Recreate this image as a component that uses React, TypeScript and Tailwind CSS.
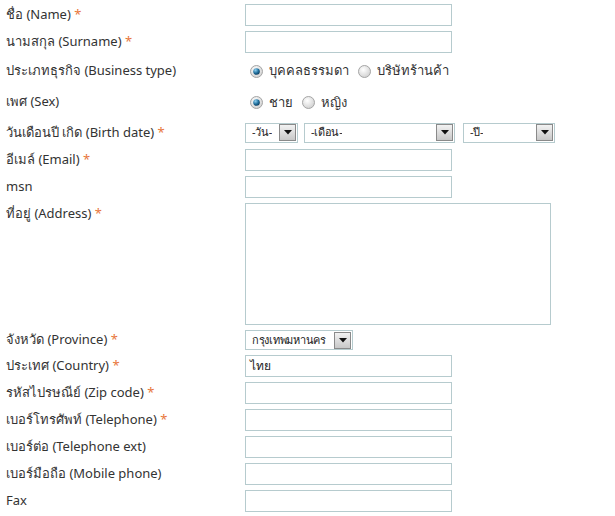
import React from 'react';

const FONT = { fontFamily: '"Noto Sans", Tahoma, "DejaVu Sans", sans-serif' };

function Star() {
  return <span className="text-[#e8763c]"> *</span>;
}

function Label({ th, en, req }: { th: string; en: string; req?: boolean }) {
  return (
    <span className="text-[13px] leading-[18px] text-[#333]">
      {th}
      {en ? ` (${en})` : ''}
      {req && <Star />}
    </span>
  );
}

function Radio({ on }: { on?: boolean }) {
  return (
    <svg width="13" height="13" viewBox="0 0 13 13" className="shrink-0">
      <defs>
        <radialGradient id="rg-off" cx="40%" cy="35%" r="70%">
          <stop offset="0%" stopColor="#ffffff" />
          <stop offset="100%" stopColor="#cfcfcf" />
        </radialGradient>
        <radialGradient id="rg-dot" cx="35%" cy="30%" r="75%">
          <stop offset="0%" stopColor="#8fd0f0" />
          <stop offset="60%" stopColor="#1f6e9c" />
          <stop offset="100%" stopColor="#0d3a5a" />
        </radialGradient>
      </defs>
      <circle cx="6.5" cy="6.5" r="6" fill="url(#rg-off)" stroke="#a5a5a5" strokeWidth="1" />
      {on && <circle cx="6.5" cy="6.5" r="3.3" fill="url(#rg-dot)" />}
    </svg>
  );
}

function Arrow() {
  return (
    <div className="w-[17px] h-[17px] shrink-0 border border-[#8a8a8a] bg-gradient-to-b from-[#f2f2f2] to-[#c8c8c8] flex items-center justify-center">
      <svg width="8" height="5" viewBox="0 0 8 5">
        <path d="M0 0 L8 0 L4 4.5 Z" fill="#111" />
      </svg>
    </div>
  );
}

function Select({ text, w, size = 'text-[11px]' }: { text: string; w: string; size?: string }) {
  return (
    <div className={`${w} h-[20px] border border-[#b6cbce] bg-white flex items-center justify-between pl-[6px] pr-px`}>
      <span className={`${size} text-[#222] tracking-tight whitespace-nowrap overflow-hidden`}>{text}</span>
      <Arrow />
    </div>
  );
}

function Input({ value }: { value?: string }) {
  return (
    <div className="w-[207px] h-[22px] border border-[#b6cbce] bg-white flex items-center px-[4px]">
      <span className="text-[12px] text-[#222]">{value}</span>
    </div>
  );
}

function Row({ h, top, children, label }: { h: string; top?: boolean; children: React.ReactNode; label: React.ReactNode }) {
  return (
    <div className={`flex ${h} ${top ? 'items-start' : 'items-center'}`}>
      <div className={`w-[245px] shrink-0 pl-[6px] flex ${top ? 'pt-[1px]' : '-mt-[2px]'}`}>{label}</div>
      <div className="flex items-center h-full">{children}</div>
    </div>
  );
}

export default function App() {
  return (
    <div className="w-[615px] h-[516px] bg-white overflow-hidden" style={FONT}>
      <div className="flex flex-col gap-[5px] pt-[4px]">
        <Row h="h-[22px]" label={<Label th="ชื่อ" en="Name" req />}>
          <Input />
        </Row>
        <Row h="h-[22px]" label={<Label th="นามสกุล" en="Surname" req />}>
          <Input />
        </Row>
        <Row h="h-[25px]" label={<Label th="ประเภทธุรกิจ" en="Business type" />}>
          <div className="flex items-center pl-[5px] pt-[1px] text-[13px] text-[#333]">
            <Radio on />
            <span className="ml-[6px]">บุคคลธรรมดา</span>
            <span className="ml-[9px]"><Radio /></span>
            <span className="ml-[6px]">บริษัทร้านค้า</span>
          </div>
        </Row>
        <Row h="h-[28px]" label={<Label th="เพศ" en="Sex" />}>
          <div className="flex items-center pl-[5px] pt-[1px] text-[13px] text-[#333]">
            <Radio on />
            <span className="ml-[6px]">ชาย</span>
            <span className="ml-[9px]"><Radio /></span>
            <span className="ml-[6px]">หญิง</span>
          </div>
        </Row>
        <Row h="h-[23px]" label={<Label th="วันเดือนปี เกิด" en="Birth date" req />}>
          <div className="flex items-center gap-[6px]">
            <Select text="-วัน-" w="w-[53px]" />
            <Select text="-เดือน-" w="w-[151px]" />
            <span className="ml-[2px]"><Select text="-ปี-" w="w-[92px]" /></span>
          </div>
        </Row>
        <Row h="h-[22px]" label={<Label th="อีเมล์" en="Email" req />}>
          <Input />
        </Row>
        <Row h="h-[22px]" label={<Label th="msn" en="" />}>
          <Input />
        </Row>
        <Row h="h-[122px]" top label={<Label th="ที่อยู่" en="Address" req />}>
          <div className="w-[306px] h-[122px] border border-[#b6cbce] bg-white" />
        </Row>
        <Row h="h-[20px]" label={<Label th="จังหวัด" en="Province" req />}>
          <Select text="กรุงเทพมหานคร" w="w-[108px]" size="text-[11px]" />
        </Row>
        <Row h="h-[22px]" label={<Label th="ประเทศ" en="Country" req />}>
          <Input value="ไทย" />
        </Row>
        <Row h="h-[22px]" label={<Label th="รหัสไปรษณีย์" en="Zip code" req />}>
          <Input />
        </Row>
        <Row h="h-[22px]" label={<Label th="เบอร์โทรศัพท์" en="Telephone" req />}>
          <Input />
        </Row>
        <Row h="h-[22px]" label={<Label th="เบอร์ต่อ" en="Telephone ext" />}>
          <Input />
        </Row>
        <Row h="h-[22px]" label={<Label th="เบอร์มือถือ" en="Mobile phone" />}>
          <Input />
        </Row>
        <Row h="h-[22px]" label={<Label th="Fax" en="" />}>
          <Input />
        </Row>
      </div>
    </div>
  );
}
